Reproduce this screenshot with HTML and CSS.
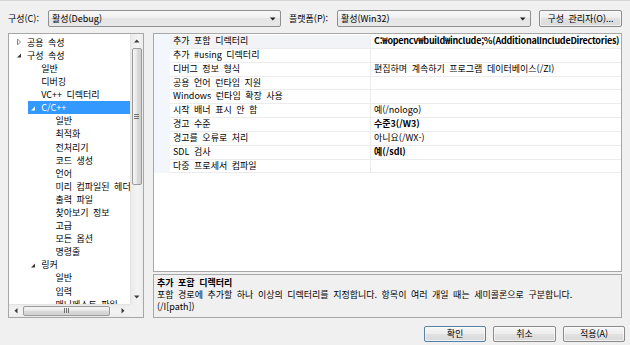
FILE: index.html
```html
<!DOCTYPE html>
<html lang="ko">
<head>
<meta charset="utf-8">
<link rel="stylesheet" href="styles.css">
</head>
<body>
<div class="dialog">
  <div class="toprow">
    <span class="lbl lbl1">구성(C):</span>
    <div class="combo c1"><span>활성(Debug)</span><svg class="darr" width="6" height="4" viewBox="0 0 6 4"><path d="M0 0.5 H5.5 L2.75 3.5 Z" fill="#1e1e1e"/></svg></div>
    <span class="lbl lbl2">플랫폼(P):</span>
    <div class="combo c2"><span>활성(Win32)</span><svg class="darr" width="6" height="4" viewBox="0 0 6 4"><path d="M0 0.5 H5.5 L2.75 3.5 Z" fill="#1e1e1e"/></svg></div>
    <div class="btn mgr">구성 관리자(O)...</div>
  </div>

  <div class="main">
    <div class="tree-panel">
      <div class="tree-top">
        <div class="tree-list">
          <div class="trow l0"><span class="item"><span class="exp"><svg width="6" height="8" viewBox="0 0 6 8"><path d="M1.5 1 L4.5 4 L1.5 7 Z" fill="#fff" stroke="#8a8a8a"/></svg></span><span>공용 속성</span></span></div>
          <div class="trow l0"><span class="item"><span class="exp"><svg width="6" height="8" viewBox="0 0 6 8"><path d="M5 2.5 L5 6.5 L1 6.5 Z" fill="#3a3a3a"/></svg></span><span>구성 속성</span></span></div>
          <div class="trow l1"><span class="item"><span class="exp"></span><span>일반</span></span></div>
          <div class="trow l1"><span class="item"><span class="exp"></span><span>디버깅</span></span></div>
          <div class="trow l1"><span class="item"><span class="exp"></span><span>VC++ 디렉터리</span></span></div>
          <div class="trow l1"><span class="item sel"><span class="exp"><svg width="6" height="8" viewBox="0 0 6 8"><path d="M5 2.5 L5 6.5 L1 6.5 Z" fill="#fff"/></svg></span><span>C/C++</span></span></div>
          <div class="trow l2"><span class="item"><span class="exp"></span><span>일반</span></span></div>
          <div class="trow l2"><span class="item"><span class="exp"></span><span>최적화</span></span></div>
          <div class="trow l2"><span class="item"><span class="exp"></span><span>전처리기</span></span></div>
          <div class="trow l2"><span class="item"><span class="exp"></span><span>코드 생성</span></span></div>
          <div class="trow l2"><span class="item"><span class="exp"></span><span>언어</span></span></div>
          <div class="trow l2"><span class="item"><span class="exp"></span><span>미리 컴파일된 헤더</span></span></div>
          <div class="trow l2"><span class="item"><span class="exp"></span><span>출력 파일</span></span></div>
          <div class="trow l2"><span class="item"><span class="exp"></span><span>찾아보기 정보</span></span></div>
          <div class="trow l2"><span class="item"><span class="exp"></span><span>고급</span></span></div>
          <div class="trow l2"><span class="item"><span class="exp"></span><span>모든 옵션</span></span></div>
          <div class="trow l2"><span class="item"><span class="exp"></span><span>명령줄</span></span></div>
          <div class="trow l1"><span class="item"><span class="exp"><svg width="6" height="8" viewBox="0 0 6 8"><path d="M5 2.5 L5 6.5 L1 6.5 Z" fill="#3a3a3a"/></svg></span><span>링커</span></span></div>
          <div class="trow l2"><span class="item"><span class="exp"></span><span>일반</span></span></div>
          <div class="trow l2"><span class="item"><span class="exp"></span><span>입력</span></span></div>
          <div class="trow l2"><span class="item"><span class="exp"></span><span>매니페스트 파일</span></span></div>
        </div>
        <div class="vscroll">
          <div class="sbtn"><svg width="6" height="4" viewBox="0 0 6 4"><path d="M0 3.5 H5.5 L2.75 0.5 Z" fill="#3c3c3c"/></svg></div>
          <div class="vthumb"><span class="vgrip"></span></div>
          <div class="vfill"></div>
          <div class="sbtn"><svg width="6" height="4" viewBox="0 0 6 4"><path d="M0 0.5 H5.5 L2.75 3.5 Z" fill="#3c3c3c"/></svg></div>
        </div>
      </div>
      <div class="hrow">
        <div class="hscroll">
          <div class="hbtn"><svg width="4" height="6" viewBox="0 0 4 6"><path d="M3.5 0 V5.5 L0.5 2.75 Z" fill="#3c3c3c"/></svg></div>
          <div class="hthumb"><span class="hgrip"></span></div>
          <div class="hfill"></div>
          <div class="hbtn"><svg width="4" height="6" viewBox="0 0 4 6"><path d="M0.5 0 V5.5 L3.5 2.75 Z" fill="#3c3c3c"/></svg></div>
        </div>
        <div class="corner"></div>
      </div>
    </div>

    <div class="right">
      <div class="grid">
        <div class="rows">
          <div class="grow"><span class="gut"></span><span class="name selname">추가 포함 디렉터리</span><span class="val b path">C:₩opencv₩build₩include;%(AdditionalIncludeDirectories)</span></div>
          <div class="grow"><span class="gut"></span><span class="name">추가 #using 디렉터리</span><span class="val"></span></div>
          <div class="grow"><span class="gut"></span><span class="name">디버그 정보 형식</span><span class="val">편집하며 계속하기 프로그램 데이터베이스(/ZI)</span></div>
          <div class="grow"><span class="gut"></span><span class="name">공용 언어 런타임 지원</span><span class="val"></span></div>
          <div class="grow"><span class="gut"></span><span class="name">Windows 런타임 확장 사용</span><span class="val"></span></div>
          <div class="grow"><span class="gut"></span><span class="name">시작 배너 표시 안 함</span><span class="val">예(/nologo)</span></div>
          <div class="grow"><span class="gut"></span><span class="name">경고 수준</span><span class="val b">수준3(/W3)</span></div>
          <div class="grow"><span class="gut"></span><span class="name">경고를 오류로 처리</span><span class="val">아니요(/WX-)</span></div>
          <div class="grow"><span class="gut"></span><span class="name">SDL 검사</span><span class="val b">예(/sdl)</span></div>
          <div class="grow"><span class="gut"></span><span class="name">다중 프로세서 컴파일</span><span class="val"></span></div>
        </div>
      </div>
      <div class="desc">
        <div class="b">추가 포함 디렉터리</div>
        <div>포함 경로에 추가할 하나 이상의 디렉터리를 지정합니다. 항목이 여러 개일 때는 세미콜론으로 구분합니다.</div>
        <div>(/I[path])</div>
      </div>
    </div>
  </div>

  <div class="buttons">
    <div class="btn dlg def">확인</div>
    <div class="btn dlg w63">취소</div>
    <div class="btn dlg">적용(A)</div>
  </div>
</div>
</body>
</html>
```

FILE: styles.css
```css
* { box-sizing: border-box; }
html, body { margin: 0; padding: 0; }
body {
  background: #f0f0f0;
  font-family: "Noto Sans CJK KR", "Noto Sans", sans-serif;
  font-size: 9px;
  word-spacing: 2px;
  color: #000;
}
.dialog {
  width: 630px;
  height: 345px;
  border-top: 1px solid #d6d6d6;
  overflow: hidden;
}
.b { font-weight: bold; }

/* top row */
.toprow {
  display: flex;
  align-items: center;
  height: 17px;
  margin-top: 9px;
  padding-left: 8px;
  line-height: 15px;
}
.lbl1 { width: 40px; }
.lbl2 { width: 48px; margin-left: 8px; }
.combo {
  height: 17px;
  border: 1px solid #8f9092;
  border-radius: 2px;
  background: linear-gradient(#f8f8f8, #efefef 50%, #e5e5e5 50%, #e8e8e8);
  display: flex;
  align-items: center;
  justify-content: space-between;
  padding-left: 3px;
  padding-right: 4px;
}
.c1 { width: 233px; }
.c2 { width: 194px; }
.darr { display: block; }

.btn {
  height: 17px;
  border: 1px solid #8a8a8a;
  border-radius: 2px;
  background: linear-gradient(#f6f6f6, #ededed 50%, #e1e1e1 50%, #dadada);
  box-shadow: inset 0 0 0 1px rgba(255,255,255,0.6);
  display: flex;
  align-items: center;
  justify-content: center;
  line-height: 14px;
}
.mgr { width: 83px; margin-left: 8px; }

/* main area */
.main {
  display: flex;
  margin-top: 6px;
  padding-left: 8px;
  height: 285px;
}
.tree-panel {
  width: 136px;
  height: 285px;
  border: 1px solid #a7a7a7;
  background: #fff;
  display: flex;
  flex-direction: column;
}
.tree-top { display: flex; height: 270px; }
.tree-list {
  width: 121px;
  overflow: hidden;
  padding-top: 1.8px;
}
.trow {
  height: 13.1px;
  line-height: 13.1px;
  display: flex;
  white-space: nowrap;
  flex: none;
}
.l0 { padding-left: 5px; }
.l1 { padding-left: 19.2px; }
.l2 { padding-left: 33.4px; }
.item { display: flex; align-items: center; flex: 1; }
.item.sel { background: #3399ff; color: #fff; }
.exp {
  width: 13px;
  flex: none;
  display: flex;
  align-items: center;
  padding-left: 2px;
}
.exp svg { display: block; }

/* scrollbars */
.vscroll {
  width: 13px;
  display: flex;
  flex-direction: column;
  background: linear-gradient(to right, #dcdcdc 0, #ebebeb 1px, #f4f4f4 60%, #ececec);
}
.sbtn {
  height: 14px;
  display: flex;
  align-items: center;
  justify-content: center;
  flex: none;
}
.vthumb {
  height: 137px;
  margin: 0 1px 0 1.5px;
  border: 1px solid #9a9a9a;
  border-radius: 2px;
  background: linear-gradient(to right, #f5f5f5, #e8e8e8 45%, #d9d9d9 55%, #d2d2d2);
  display: flex;
  align-items: center;
  justify-content: center;
  flex: none;
}
.vgrip {
  width: 5px;
  height: 5px;
  background: repeating-linear-gradient(#707070 0 1px, transparent 1px 2px);
}
.vfill { flex: 1; }
.hrow { display: flex; height: 13px; }
.hscroll {
  width: 121px;
  display: flex;
  background: linear-gradient(#dcdcdc 0, #ebebeb 1px, #f4f4f4 60%, #ececec);
}
.hbtn {
  width: 14px;
  display: flex;
  align-items: center;
  justify-content: center;
  flex: none;
}
.hthumb {
  width: 87px;
  margin: 1.5px 0 1px 0;
  border: 1px solid #9a9a9a;
  border-radius: 2px;
  background: linear-gradient(#f5f5f5, #e8e8e8 45%, #d9d9d9 55%, #d2d2d2);
  display: flex;
  align-items: center;
  justify-content: center;
  flex: none;
}
.hgrip {
  width: 5px;
  height: 5px;
  background: repeating-linear-gradient(to right, #707070 0 1px, transparent 1px 2px);
}
.hfill { flex: 1; }
.corner { width: 13px; background: #f0f0f0; }

/* property grid */
.right {
  margin-left: 9px;
  width: 469px;
  display: flex;
  flex-direction: column;
}
.grid {
  height: 239px;
  border: 1px solid #a7a7a7;
  background: #fff;
}
.rows {
  padding-top: 1px;
  background: linear-gradient(to right, #f3f6fa 16px, #fff 16px);
}
.grow {
  display: flex;
  height: 13.85px;
  white-space: nowrap;
}
.gut { width: 16px; flex: none; }
.name, .val {
  line-height: 12.85px;
  border-bottom: 1px solid #ececec;
  background: #fff;
  overflow: hidden;
}
.name { width: 200px; flex: none; padding-left: 3px; }
.selname { background: #f1f3f6; }
.val { flex: 1; padding-left: 3px; border-left: 1px solid #ececec; }
.path { letter-spacing: -0.25px; }

.desc {
  margin-top: 2px;
  height: 44px;
  border: 1px solid #a7a7a7;
  padding: 2px 3px;
  line-height: 12px;
  white-space: nowrap;
}

/* bottom buttons */
.buttons {
  display: flex;
  justify-content: flex-end;
  gap: 7px;
  padding-right: 5px;
  margin-top: 8px;
}
.dlg { width: 62px; height: 16px; }
.w63 { width: 63px; }
.def { border-color: #5580aa; }
```
